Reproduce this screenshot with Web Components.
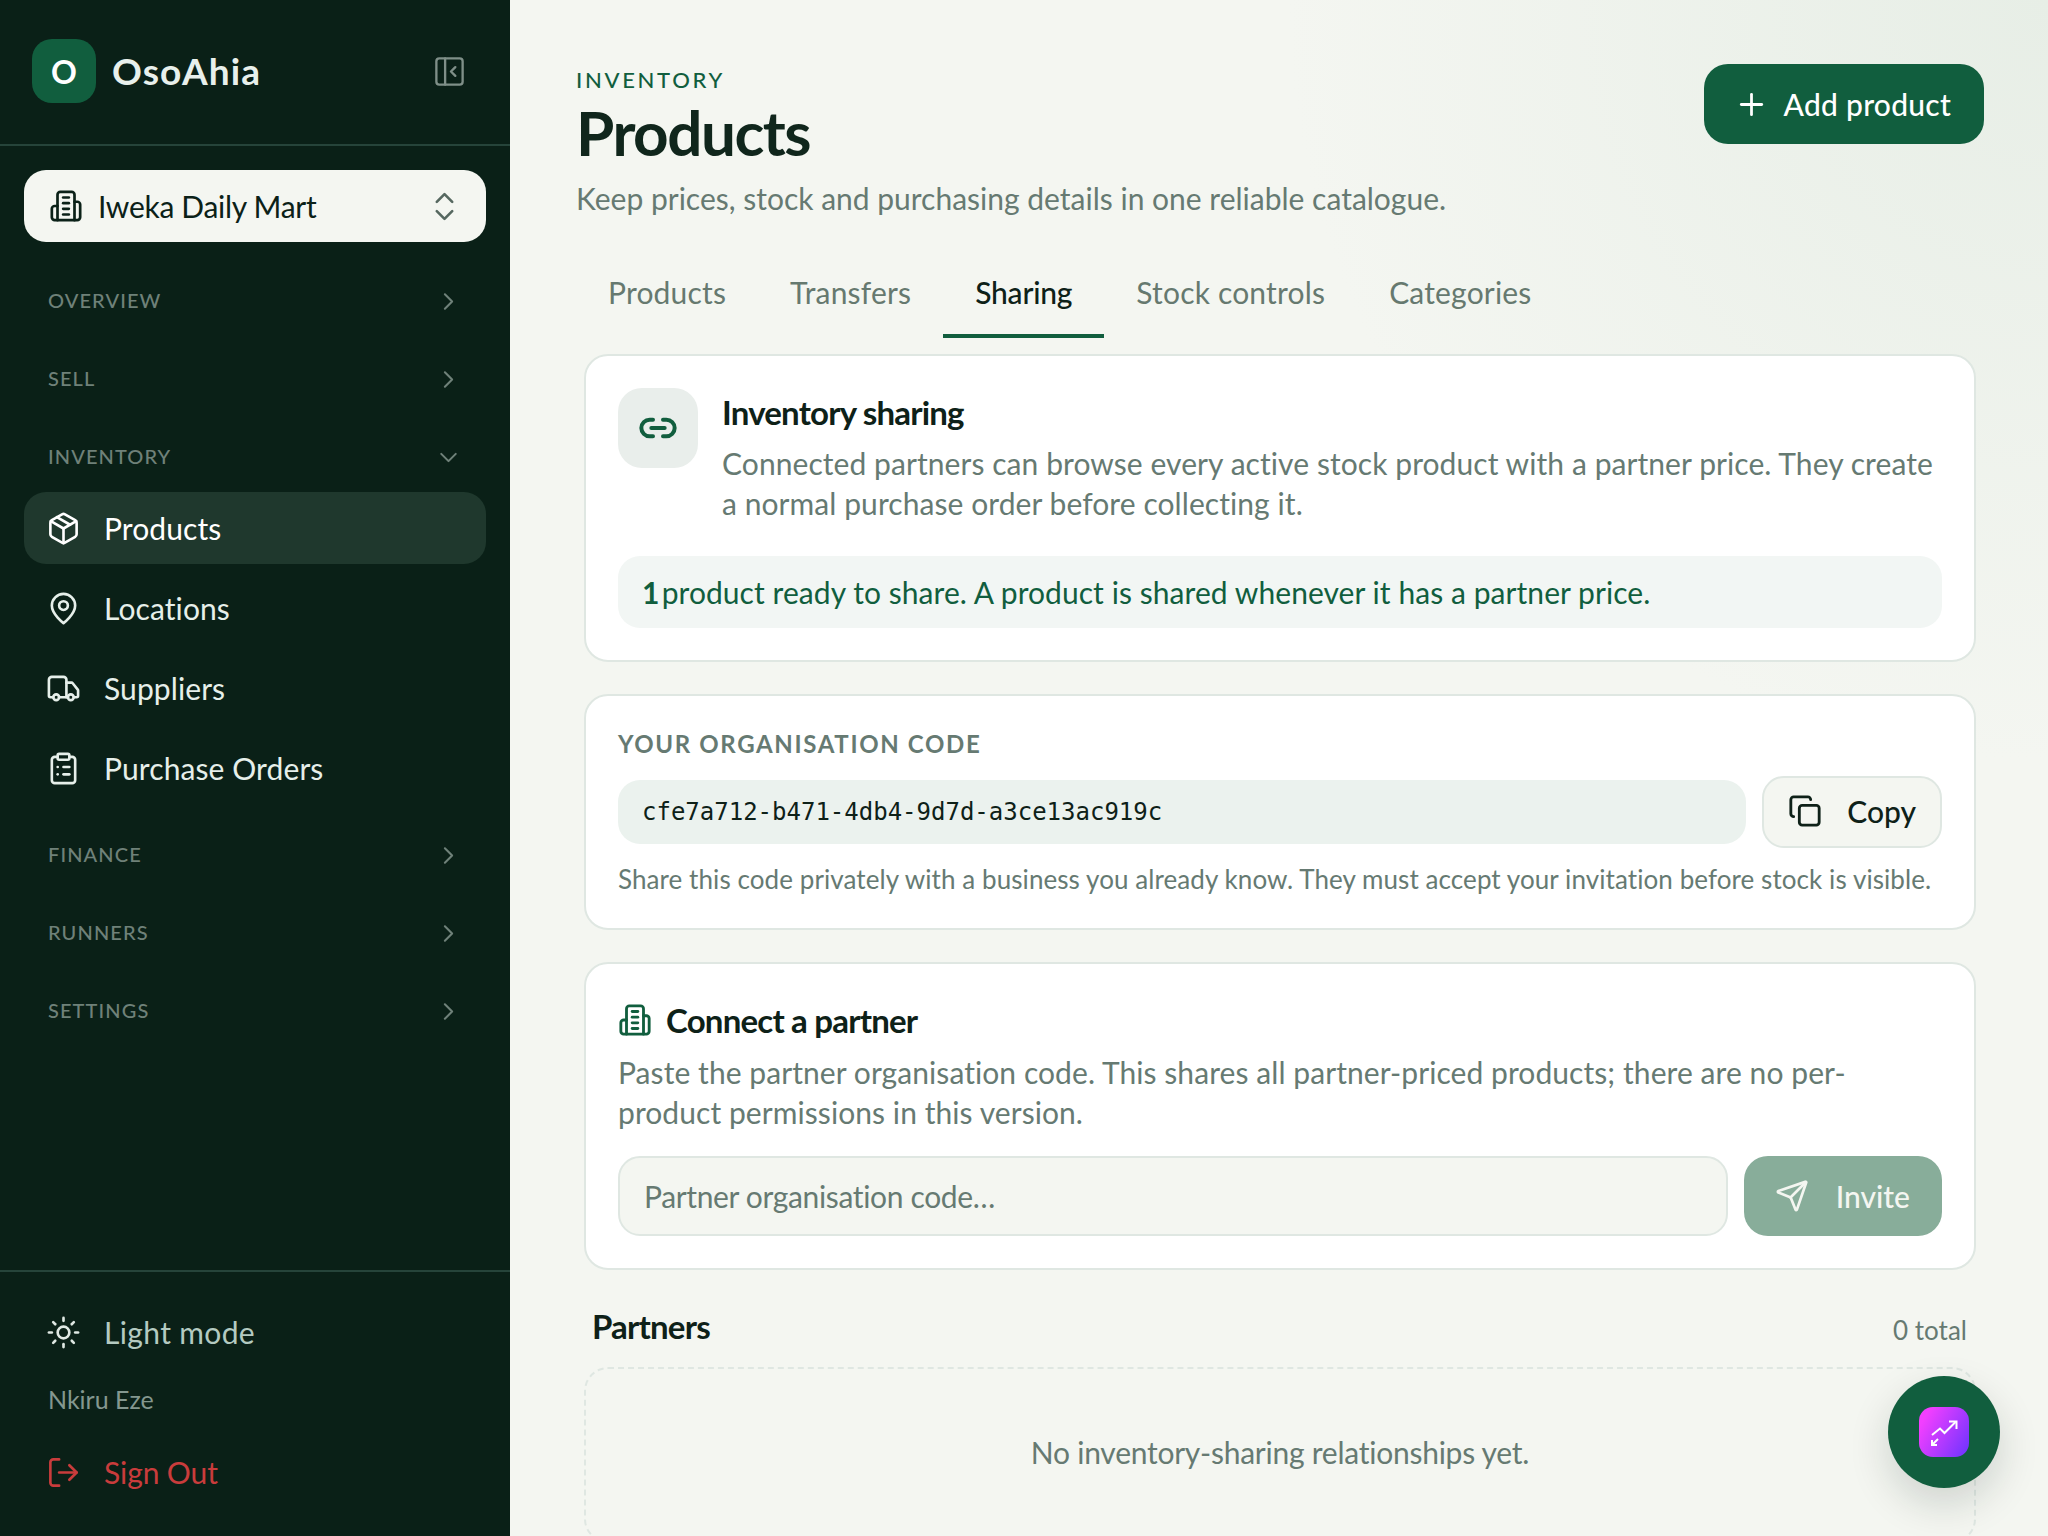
<!doctype html>
<html lang="en">
<head>
<meta charset="utf-8">
<title>OsoAhia - Products</title>
<style>
    html, body { margin: 0; height: 100%; overflow: hidden; }
    body { font-family: Lato, "Liberation Sans", sans-serif; background: #f4f6f1; }
</style>
</head>
<body>
<app-shell>
    <side-bar slot="side">
        <brand-head></brand-head>
        <org-switcher>Iweka Daily Mart</org-switcher>
        <nav-section label="OVERVIEW"></nav-section>
        <nav-section label="SELL"></nav-section>
        <nav-section label="INVENTORY" open>
            <nav-link icon="package" active>Products</nav-link>
            <nav-link icon="pin">Locations</nav-link>
            <nav-link icon="truck">Suppliers</nav-link>
            <nav-link icon="clipboard">Purchase Orders</nav-link>
        </nav-section>
        <nav-section label="FINANCE"></nav-section>
        <nav-section label="RUNNERS"></nav-section>
        <nav-section label="SETTINGS"></nav-section>
        <side-footer slot="footer" user="Nkiru Eze"></side-footer>
    </side-bar>
    <page-head eyebrow="INVENTORY" heading="Products" sub="Keep prices, stock and purchasing details in one reliable catalogue."></page-head>
    <tab-bar>
        <tab-item>Products</tab-item>
        <tab-item>Transfers</tab-item>
        <tab-item active>Sharing</tab-item>
        <tab-item>Stock controls</tab-item>
        <tab-item>Categories</tab-item>
    </tab-bar>
    <share-intro></share-intro>
    <org-code code="cfe7a712-b471-4db4-9d7d-a3ce13ac919c"></org-code>
    <connect-partner></connect-partner>
    <partner-list></partner-list>
    <assist-fab></assist-fab>
</app-shell>

<script>
const ICONS = {
    panel: '<rect x="3" y="3" width="18" height="18" rx="2"/><path d="M9 3v18"/><path d="m16 15-3-3 3-3"/>',
    building: '<path d="M6 22V4a2 2 0 0 1 2-2h8a2 2 0 0 1 2 2v18Z"/><path d="M6 12H4a2 2 0 0 0-2 2v6a2 2 0 0 0 2 2h2"/><path d="M18 9h2a2 2 0 0 1 2 2v9a2 2 0 0 1-2 2h-2"/><path d="M10 6h4"/><path d="M10 10h4"/><path d="M10 14h4"/><path d="M10 18h4"/>',
    updown: '<path d="m7 15 5 5 5-5"/><path d="m7 9 5-5 5 5"/>',
    right: '<path d="m9 18 6-6-6-6"/>',
    down: '<path d="m6 9 6 6 6-6"/>',
    package: '<path d="M11 21.73a2 2 0 0 0 2 0l7-4A2 2 0 0 0 21 16V8a2 2 0 0 0-1-1.73l-7-4a2 2 0 0 0-2 0l-7 4A2 2 0 0 0 3 8v8a2 2 0 0 0 1 1.73z"/><path d="M12 22V12"/><path d="m3.3 7 8.7 5 8.7-5"/><path d="m7.5 4.27 9 5.15"/>',
    pin: '<path d="M20 10c0 6-8 12-8 12s-8-6-8-12a8 8 0 0 1 16 0Z"/><circle cx="12" cy="10" r="3"/>',
    truck: '<path d="M14 18V6a2 2 0 0 0-2-2H4a2 2 0 0 0-2 2v11a1 1 0 0 0 1 1h2"/><path d="M15 18H9"/><path d="M19 18h2a1 1 0 0 0 1-1v-3.65a1 1 0 0 0-.22-.624l-3.48-4.35A1 1 0 0 0 17.52 8H14"/><circle cx="17" cy="18" r="2"/><circle cx="7" cy="18" r="2"/>',
    clipboard: '<rect x="8" y="2" width="8" height="4" rx="1"/><path d="M16 4h2a2 2 0 0 1 2 2v14a2 2 0 0 1-2 2H6a2 2 0 0 1-2-2V6a2 2 0 0 1 2-2h2"/><path d="M12 11h4"/><path d="M12 16h4"/><path d="M8 11h.01"/><path d="M8 16h.01"/>',
    sun: '<circle cx="12" cy="12" r="4"/><path d="M12 2v2"/><path d="M12 20v2"/><path d="m4.93 4.93 1.41 1.41"/><path d="m17.66 17.66 1.41 1.41"/><path d="M2 12h2"/><path d="M20 12h2"/><path d="m6.34 17.66-1.41 1.41"/><path d="m19.07 4.93-1.41 1.41"/>',
    logout: '<path d="M9 21H5a2 2 0 0 1-2-2V5a2 2 0 0 1 2-2h4"/><path d="m16 17 5-5-5-5"/><path d="M21 12H9"/>',
    plus: '<path d="M5 12h14"/><path d="M12 5v14"/>',
    link: '<path d="M9 17H7A5 5 0 0 1 7 7h2"/><path d="M15 7h2a5 5 0 1 1 0 10h-2"/><path d="M8 12h8"/>',
    copy: '<rect x="8" y="8" width="14" height="14" rx="2"/><path d="M4 16c-1.1 0-2-.9-2-2V4c0-1.1.9-2 2-2h10c1.1 0 2 .9 2 2"/>',
    send: '<path d="M14.536 21.686a.5.5 0 0 0 .937-.024l6.5-19a.496.496 0 0 0-.635-.635l-19 6.5a.5.5 0 0 0-.024.937l7.93 3.18a2 2 0 0 1 1.112 1.11z"/><path d="m21.854 2.147-10.94 10.939"/>'
};

function icon(name, size, stroke = 2) {
    return `<svg width="${size}" height="${size}" viewBox="0 0 24 24" fill="none" stroke="currentColor"
        stroke-width="${stroke}" stroke-linecap="round" stroke-linejoin="round" style="display:block;flex:none">${ICONS[name]}</svg>`;
}

class Base extends HTMLElement {
    constructor() {
        super();
        this.shadowDOM = this.attachShadow({ mode: 'open' });
    }

    connectedCallback() {
        this.shadowDOM.innerHTML = this.render();
    }
}

class AppShell extends Base {
    render() {
        return `
            <style>
                :host { display: flex; width: 2048px; height: 1536px; overflow: hidden; }
                main {
                    flex: 1; min-width: 0; box-sizing: border-box; height: 1536px; overflow: hidden;
                    padding: 64px 64px 0 66px;
                    background: radial-gradient(circle 760px at 100% 0, #e7eee6, #f4f6f1);
                }
            </style>
            <slot name="side"></slot>
            <main><slot></slot></main>
        `;
    }
}

class SideBar extends Base {
    render() {
        return `
            <style>
                :host {
                    display: flex; flex-direction: column; flex: none; width: 510px; height: 1536px;
                    box-sizing: border-box; background: #0a2017;
                }
                nav { flex: 1; min-height: 0; }
            </style>
            <nav><slot></slot></nav>
            <slot name="footer"></slot>
        `;
    }
}

class BrandHead extends Base {
    render() {
        return `
            <style>
                :host {
                    display: flex; align-items: center; height: 146px; box-sizing: border-box;
                    padding: 0 43px 2px 32px; border-bottom: 2px solid #26443a; color: #e8f0ec;
                }
                .mark {
                    width: 64px; height: 64px; border-radius: 20px; background: #115e3e; color: #fff;
                    display: flex; align-items: center; justify-content: center;
                    font-size: 32px; font-weight: 700;
                }
                .name { flex: 1; margin: -2px 0 0 16px; font-size: 37px; font-weight: 700; letter-spacing: 1.1px; }
                .toggle { color: #7f8f88; }
            </style>
            <div class="mark">O</div>
            <div class="name">OsoAhia</div>
            <div class="toggle">${icon('panel', 35, 1.6)}</div>
        `;
    }
}

class OrgSwitcher extends Base {
    render() {
        return `
            <style>
                :host {
                    display: flex; align-items: center; height: 72px; box-sizing: border-box;
                    margin: 24px 24px 36px; padding: 0 23px 0 25px; border-radius: 22px;
                    background: #f4f6f1; color: #0b2118; font-size: 30px; letter-spacing: -0.3px;
                }
                span { flex: 1; margin-left: 15px; }
                .chev { color: #566860; }
            </style>
            ${icon('building', 34, 1.9)}
            <span><slot></slot></span>
            <div class="chev">${icon('updown', 37, 1.7)}</div>
        `;
    }
}

class NavSection extends Base {
    render() {
        const open = this.hasAttribute('open');
        return `
            <style>
                :host { display: block; margin: 0 24px ${open ? 28 : 32}px; }
                .row {
                    display: flex; align-items: center; justify-content: space-between; height: 46px;
                    padding: 0 23px 0 24px; color: #6f8179; font-size: 20px; font-weight: 500; letter-spacing: 1.1px;
                }
                .row span { margin-top: -2px; }
                .items { display: flex; flex-direction: column; gap: 8px; margin-top: 12px; }
            </style>
            <div class="row"><span>${this.getAttribute('label')}</span>${icon(open ? 'down' : 'right', 29, 1.7)}</div>
            ${open ? '<div class="items"><slot></slot></div>' : ''}
        `;
    }
}

class NavLink extends Base {
    render() {
        const active = this.hasAttribute('active');
        return `
            <style>
                :host {
                    display: flex; align-items: center; gap: 23px; height: 72px; padding: 0 24px 0 22px;
                    border-radius: 22px; font-size: 30px; letter-spacing: 0.1px; color: ${active ? '#fff' : '#e6efea'};
                    background: ${active ? '#1f382d' : 'transparent'};
                }
            </style>
            ${icon(this.getAttribute('icon'), 35, 1.8)}
            <span><slot></slot></span>
        `;
    }
}

class SideFooter extends Base {
    render() {
        return `
            <style>
                :host {
                    display: block; box-sizing: border-box; height: 266px; padding: 24px 48px 0 46px;
                    border-top: 2px solid #26443a; font-size: 30px;
                }
                .row { display: flex; align-items: center; gap: 23px; height: 72px; }
                .mode { color: #b4cac1; letter-spacing: 0.35px; }
                .user { height: 32px; margin: 15px 0 21px 2px; color: #84978f; font-size: 25px; line-height: 32px; }
                .out { color: #c93c3c; letter-spacing: -0.1px; }
                .mode svg { color: #dfe8e3; }
            </style>
            <div class="row mode">${icon('sun', 35, 1.8)}<span>Light mode</span></div>
            <div class="user">${this.getAttribute('user')}</div>
            <div class="row out">${icon('logout', 35, 1.8)}<span>Sign Out</span></div>
        `;
    }
}

class PageHead extends Base {
    render() {
        return `
            <style>
                :host { display: flex; align-items: flex-start; justify-content: space-between; height: 200px; box-sizing: border-box; }
                .eyebrow { margin-bottom: 2px; color: #115e3e; font-size: 22px; line-height: 31px; font-weight: 500; letter-spacing: 2.7px; }
                h1 { margin: 0; color: #10261c; font-size: 62px; line-height: 70px; font-weight: 700; letter-spacing: -1.5px; }
                p { margin: 11px 0 0; color: #667a72; font-size: 30px; line-height: 40px; }
                .add {
                    display: flex; align-items: center; gap: 15px; height: 80px; box-sizing: border-box; padding: 0 33px 0 30px;
                    border-radius: 24px; background: #115e3e; color: #fff; font-size: 30px; font-weight: 500; letter-spacing: 0.25px;
                }
            </style>
            <div>
                <div class="eyebrow">${this.getAttribute('eyebrow')}</div>
                <h1>${this.getAttribute('heading')}</h1>
                <p>${this.getAttribute('sub')}</p>
            </div>
            <div class="add">${icon('plus', 35, 1.9)}<span>Add product</span></div>
        `;
    }
}

class TabBar extends Base {
    render() {
        return `
            <style>:host { display: flex; height: 74px; margin-bottom: 16px; }</style>
            <slot></slot>
        `;
    }
}

class TabItem extends Base {
    render() {
        const active = this.hasAttribute('active');
        return `
            <style>
                :host {
                    display: flex; align-items: center; box-sizing: border-box; padding: 0 32px 14px; height: 74px;
                    font-size: 30px; letter-spacing: ${active ? -0.2 : 0.18}px; color: ${active ? '#0e2118' : '#66796f'};
                    font-weight: ${active ? 500 : 400};
                    border-bottom: 4px solid ${active ? '#115e3e' : 'transparent'};
                }
            </style>
            <slot></slot>
        `;
    }
}

const CARD = `
    :host {
        display: block; box-sizing: border-box; margin: 0 8px 32px; padding: 32px;
        background: #fff; border: 2px solid #dfe7e2; border-radius: 24px;
    }
    h2 { margin: 0; color: #0e2118; font-size: 33px; font-weight: 700; letter-spacing: -0.8px; line-height: 48px; }
    p { margin: 0; color: #667a72; font-size: 30px; line-height: 40px; letter-spacing: 0.07px; }
`;

class ShareIntro extends Base {
    render() {
        return `
            <style>
                ${CARD}
                .top { display: flex; gap: 24px; }
                .badge {
                    width: 80px; height: 80px; flex: none; border-radius: 24px; background: #e9eeeb; color: #115e3e;
                    display: flex; align-items: center; justify-content: center;
                }
                h2 { margin-bottom: 7px; }
                .note {
                    display: flex; align-items: center; height: 72px; margin-top: 33px; padding: 0 24px;
                    border-radius: 22px; background: #f2f6f4; color: #115e3e; font-size: 30px; white-space: pre; letter-spacing: 0.06px;
                }
                b { font-weight: 700; letter-spacing: -5.500px; }
            </style>
            <div class="top">
                <div class="badge">${icon('link', 40, 2.4)}</div>
                <div>
                    <h2>Inventory sharing</h2>
                    <p>Connected partners can browse every active stock product with a partner price. They create a normal purchase order before collecting it.</p>
                </div>
            </div>
            <div class="note"><span><b>1</b> product ready to share. A product is shared whenever it has a partner price.</span></div>
        `;
    }
}

class OrgCode extends Base {
    render() {
        return `
            <style>
                ${CARD}
                .label { color: #667a72; font-size: 24px; line-height: 32px; font-weight: 700; letter-spacing: 1.65px; }
                .row { display: flex; align-items: center; gap: 16px; margin-top: 16px; }
                .code {
                    flex: 1; height: 64px; display: flex; align-items: center; padding: 0 24px; border-radius: 22px;
                    background: #ebf2ee; color: #0e2118; font-family: "DejaVu Sans Mono", monospace; font-size: 24px;
                }
                .copy {
                    display: flex; align-items: center; gap: 25px; height: 72px; box-sizing: border-box; padding: 0 24px 2px 24px;
                    background: #f4f6f1; border: 2px solid #dfe7e2; border-radius: 22px; color: #0e2118;
                    font-size: 30px; font-weight: 500;
                }
                p { margin-top: 14px; font-size: 26px; line-height: 34px; white-space: nowrap; letter-spacing: 0.08px; }
            </style>
            <div class="label">YOUR ORGANISATION CODE</div>
            <div class="row">
                <div class="code">${this.getAttribute('code')}</div>
                <div class="copy">${icon('copy', 34)}<span>Copy</span></div>
            </div>
            <p>Share this code privately with a business you already know. They must accept your invitation before stock is visible.</p>
        `;
    }
}

class ConnectPartner extends Base {
    render() {
        return `
            <style>
                ${CARD}
                .title { display: flex; align-items: center; gap: 14px; height: 48px; color: #115e3e; }
                p { margin-top: 8px; }
                .row { display: flex; gap: 16px; margin-top: 24px; }
                input {
                    flex: 1; min-width: 0; height: 80px; box-sizing: border-box; padding: 0 24px;
                    background: #f4f6f1; border: 2px solid #dfe7e2; border-radius: 22px; outline: none;
                    font: 30px Lato, "Liberation Sans", sans-serif; letter-spacing: -0.35px; color: #0e2118;
                }
                input::placeholder { color: #667a72; opacity: 1; }
                .invite {
                    display: flex; align-items: center; gap: 27px; height: 80px; box-sizing: border-box; padding: 0 32px 0 31px;
                    border-radius: 24px; background: #88ad9a; color: #f4f6f1; font-size: 30px; font-weight: 500;
                }
            </style>
            <div class="title">${icon('building', 34)}<h2>Connect a partner</h2></div>
            <p>Paste the partner organisation code. This shares all partner-priced products; there are no per-product permissions in this version.</p>
            <div class="row">
                <input placeholder="Partner organisation code…">
                <div class="invite">${icon('send', 34, 1.9)}<span>Invite</span></div>
            </div>
        `;
    }
}

class PartnerList extends Base {
    render() {
        return `
            <style>
                :host { display: block; margin: 0 8px; }
                .head { display: flex; align-items: center; justify-content: space-between; height: 48px; padding: 0 9px 0 8px; margin-bottom: 17px; }
                h2 { margin: 0; color: #0e2118; font-size: 33px; font-weight: 700; letter-spacing: -0.8px; }
                .count { padding-top: 7px; color: #667a72; font-size: 26px; }
                .empty {
                    box-sizing: border-box; padding: 63px 0 69px; border: 2px dashed #dfe7e2; border-radius: 24px;
                    color: #667a72; font-size: 30px; line-height: 40px; text-align: center; letter-spacing: -0.25px;
                }
            </style>
            <div class="head"><h2>Partners</h2><span class="count">0 total</span></div>
            <div class="empty">No inventory-sharing relationships yet.</div>
        `;
    }
}

class AssistFab extends Base {
    render() {
        return `
            <style>
                :host {
                    position: fixed; right: 48px; bottom: 48px; width: 112px; height: 112px; border-radius: 50%;
                    background: #115e3e; box-shadow: 0 16px 40px rgba(10, 32, 23, 0.16);
                    display: flex; align-items: center; justify-content: center;
                }
                .tile { width: 50px; height: 50px; border-radius: 14px; background: linear-gradient(120deg, #f23fff 15%, #7a35ff 90%); }
            </style>
            <div class="tile">
                <svg width="50" height="50" viewBox="0 0 50 50" fill="none" stroke="#fff" stroke-width="2" style="display:block">
                    <path d="M13 28l8-6.500 4.500 4.500L36.500 15"/>
                    <path d="M30 14.500h7.500V22"/>
                    <path d="M19 32l-6 6"/>
                    <path d="M13 33v5h5"/>
                </svg>
            </div>
        `;
    }
}

customElements.define('app-shell', AppShell);
customElements.define('side-bar', SideBar);
customElements.define('brand-head', BrandHead);
customElements.define('org-switcher', OrgSwitcher);
customElements.define('nav-section', NavSection);
customElements.define('nav-link', NavLink);
customElements.define('side-footer', SideFooter);
customElements.define('page-head', PageHead);
customElements.define('tab-bar', TabBar);
customElements.define('tab-item', TabItem);
customElements.define('share-intro', ShareIntro);
customElements.define('org-code', OrgCode);
customElements.define('connect-partner', ConnectPartner);
customElements.define('partner-list', PartnerList);
customElements.define('assist-fab', AssistFab);
</script>
</body>
</html>
